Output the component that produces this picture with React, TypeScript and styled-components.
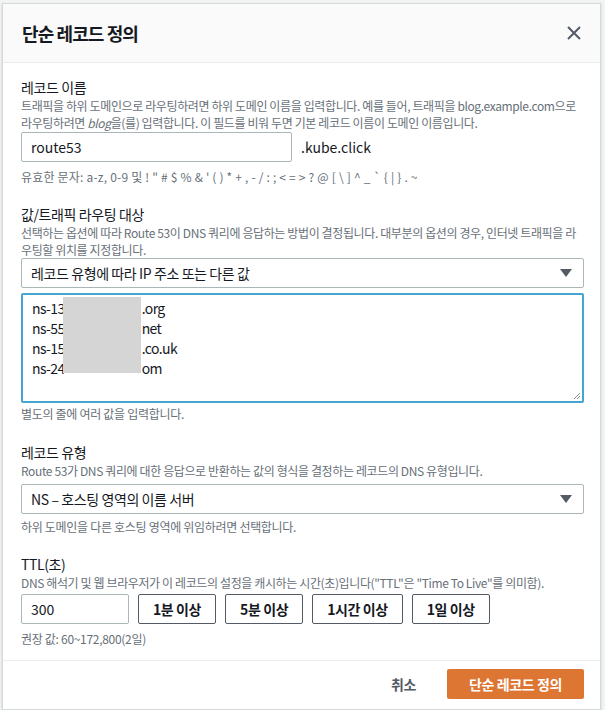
import React from "react";
import styled, { createGlobalStyle } from "styled-components";

const Global = createGlobalStyle`
  html, body { margin: 0; padding: 0; background: #f2f3f3; }
  body { font-family: "Noto Sans CJK KR", "Noto Sans", sans-serif; color: #16191f; }
  * { box-sizing: border-box; }
`;

const Modal = styled.div`
  margin: 3px 0 0 2px;
  width: 599px;
  background: #fff;
  border: 1px solid #d5dbdb;
  box-shadow: 0 1px 2px rgba(0, 28, 36, 0.2);
  display: flex;
  flex-direction: column;
`;

const Header = styled.div`
  height: 59px;
  background: #fafafa;
  border-bottom: 1px solid #eaeded;
  display: flex;
  align-items: center;
  justify-content: space-between;
  padding: 0 18px 0 19px;
`;

const Title = styled.h2`
  margin: 0;
  font-size: 18px;
  font-weight: 700;
  line-height: 22px;
  letter-spacing: -0.9px;
  color: #16191f;
`;

const CloseBtn = styled.button`
  border: 0;
  background: none;
  padding: 0;
  width: 16px;
  height: 16px;
  display: flex;
  color: #545b64;
  cursor: pointer;
`;

const Body = styled.div`
  padding: 14px 16px 13px 18px;
  display: flex;
  flex-direction: column;
`;

const Field = styled.div<{ $gap?: number }>`
  display: flex;
  flex-direction: column;
  margin-top: ${(p) => p.$gap ?? 0}px;
`;

const Label = styled.div`
  font-size: 14px;
  line-height: 20px;
  letter-spacing: -0.4px;
  color: #16191f;
`;

const Desc = styled.div`
  font-size: 12px;
  line-height: 17px;
  letter-spacing: -0.38px;
  white-space: nowrap;
  color: #687078;
  i { font-style: italic; }
`;

const Hint = styled.div<{ $mt: number; $ls?: number }>`
  font-size: 12px;
  line-height: 17px;
  letter-spacing: ${(p) => p.$ls ?? -0.3}px;
  color: #687078;
  margin-top: ${(p) => p.$mt}px;
`;

const Row = styled.div<{ $mt: number }>`
  display: flex;
  align-items: center;
  gap: 9px;
  margin-top: ${(p) => p.$mt}px;
`;

const TextInput = styled.div<{ $w: number }>`
  width: ${(p) => p.$w}px;
  height: 30px;
  border: 1px solid #aab7b8;
  border-radius: 2px;
  display: flex;
  align-items: center;
  padding: 0 9px;
  font-size: 14px;
  color: #16191f;
`;

const Suffix = styled.span`
  font-size: 14px;
  color: #16191f;
`;

const Select = styled.div<{ $mt: number }>`
  margin-top: ${(p) => p.$mt}px;
  height: 30px;
  border: 1px solid #aab7b8;
  border-radius: 2px;
  display: flex;
  align-items: center;
  justify-content: space-between;
  padding: 0 9px 0 9px;
  font-size: 14px;
  letter-spacing: -0.4px;
  color: #16191f;
`;

const Caret = styled.svg`
  width: 12px;
  height: 8px;
  margin-right: 2px;
`;

const ValueBox = styled.div`
  position: relative;
  margin-top: 5px;
  height: 110px;
  border: 2px solid #44a6cf;
  border-radius: 2px;
  padding: 3px 9px;
  font-size: 14px;
  line-height: 20px;
  letter-spacing: -0.6px;
  color: #16191f;
`;

const ValueLine = styled.div`
  white-space: pre;
`;

const Hidden = styled.span`
  display: inline-block;
  width: 77px;
`;

const Redaction = styled.div`
  position: absolute;
  left: 40px;
  top: 2px;
  width: 78px;
  height: 76px;
  background: #d5d5d5;
`;

const Grip = styled.svg`
  position: absolute;
  right: 1px;
  bottom: 1px;
  width: 8px;
  height: 8px;
`;

const TtlBtn = styled.button`
  height: 30px;
  padding: 0 14px;
  background: #fff;
  border: 1px solid #545b64;
  border-radius: 2px;
  font-family: inherit;
  font-size: 14px;
  font-weight: 700;
  letter-spacing: -0.4px;
  color: #16191f;
  cursor: pointer;
`;

const Footer = styled.div`
  border-top: 1px solid #eaeded;
  padding: 8px 16px 10px;
  display: flex;
  justify-content: flex-end;
  align-items: center;
  gap: 18px;
`;

const LinkBtn = styled.button`
  height: 30px;
  padding: 0 13px;
  border: 0;
  background: none;
  font-family: inherit;
  font-size: 14px;
  font-weight: 700;
  letter-spacing: -0.4px;
  color: #545b64;
  cursor: pointer;
`;

const PrimaryBtn = styled.button`
  height: 30px;
  width: 137px;
  border: 0;
  border-radius: 2px;
  background: #dd7633;
  font-family: inherit;
  font-size: 14px;
  font-weight: 700;
  letter-spacing: -0.4px;
  color: #fff;
  cursor: pointer;
`;

const CaretIcon = () => (
  <Caret viewBox="0 0 12 8">
    <path d="M0 0 H12 L6 8 Z" fill="#545b64" />
  </Caret>
);

const values: [string, string][] = [
  ["ns-13", ".org"],
  ["ns-55", "net"],
  ["ns-15", ".co.uk"],
  ["ns-24", "om"],
];

export default function App() {
  return (
    <>
      <Global />
      <Modal>
        <Header>
          <Title>단순 레코드 정의</Title>
          <CloseBtn aria-label="닫기">
            <svg width="16" height="16" viewBox="0 0 16 16">
              <path d="M2 2 L14 14 M14 2 L2 14" stroke="currentColor" strokeWidth="2" fill="none" />
            </svg>
          </CloseBtn>
        </Header>
        <Body>
          <Field>
            <Label>레코드 이름</Label>
            <Desc>
              트래픽을 하위 도메인으로 라우팅하려면 하위 도메인 이름을 입력합니다. 예를 들어, 트래픽을 blog.example.com으로
              <br />
              라우팅하려면 <i>blog</i>을(를) 입력합니다. 이 필드를 비워 두면 기본 레코드 이름이 도메인 이름입니다.
            </Desc>
            <Row $mt={1}>
              <TextInput $w={271}>route53</TextInput>
              <Suffix>.kube.click</Suffix>
            </Row>
            <Hint $mt={6} $ls={0.2}>
              유효한 문자: a-z, 0-9 및 ! " # $ % &amp; ' ( ) * + , - / : ; &lt; = &gt; ? @ [ \ ] ^ _ ` {"{"} | {"}"} . ~
            </Hint>
          </Field>

          <Field $gap={19}>
            <Label>값/트래픽 라우팅 대상</Label>
            <Desc>
              선택하는 옵션에 따라 Route 53이 DNS 쿼리에 응답하는 방법이 결정됩니다. 대부분의 옵션의 경우, 인터넷 트래픽을 라
              <br />
              우팅할 위치를 지정합니다.
            </Desc>
            <Select $mt={0}>
              <span>레코드 유형에 따라 IP 주소 또는 다른 값</span>
              <CaretIcon />
            </Select>
            <ValueBox>
              {values.map(([a, b]) => (
                <ValueLine key={a}>
                  {a}
                  <Hidden />
                  {b}
                </ValueLine>
              ))}
              <Redaction />
              <Grip viewBox="0 0 8 8">
                <path d="M7 1 L1 7 M7 4 L4 7" stroke="#8a8f94" strokeWidth="1" />
              </Grip>
            </ValueBox>
            <Hint $mt={2}>별도의 줄에 여러 값을 입력합니다.</Hint>
          </Field>

          <Field $gap={20}>
            <Label>레코드 유형</Label>
            <Desc>Route 53가 DNS 쿼리에 대한 응답으로 반환하는 값의 형식을 결정하는 레코드의 DNS 유형입니다.</Desc>
            <Select $mt={5}>
              <span>NS – 호스팅 영역의 이름 서버</span>
              <CaretIcon />
            </Select>
            <Hint $mt={4}>하위 도메인을 다른 호스팅 영역에 위임하려면 선택합니다.</Hint>
          </Field>

          <Field $gap={19}>
            <Label>TTL(초)</Label>
            <Desc>DNS 해석기 및 웹 브라우저가 이 레코드의 설정을 캐시하는 시간(초)입니다("TTL"은 "Time To Live"를 의미함).</Desc>
            <Row $mt={3}>
              <TextInput $w={108}>300</TextInput>
              <TtlBtn>1분 이상</TtlBtn>
              <TtlBtn>5분 이상</TtlBtn>
              <TtlBtn>1시간 이상</TtlBtn>
              <TtlBtn>1일 이상</TtlBtn>
            </Row>
            <Hint $mt={6}>권장 값: 60~172,800(2일)</Hint>
          </Field>
        </Body>
        <Footer>
          <LinkBtn>취소</LinkBtn>
          <PrimaryBtn>단순 레코드 정의</PrimaryBtn>
        </Footer>
      </Modal>
    </>
  );
}
